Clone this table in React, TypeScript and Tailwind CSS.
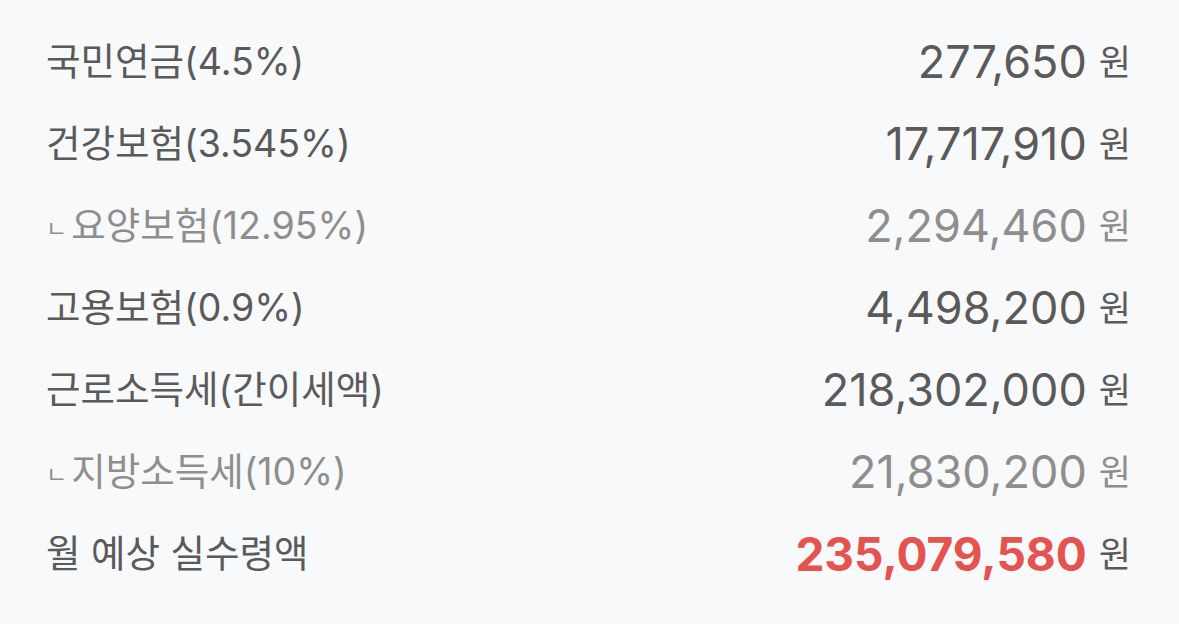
const rows = [
  { label: '국민연금(4.5%)', value: '277,650', sub: false },
  { label: '건강보험(3.545%)', value: '17,717,910', sub: false },
  { label: '요양보험(12.95%)', value: '2,294,460', sub: true },
  { label: '고용보험(0.9%)', value: '4,498,200', sub: false },
  { label: '근로소득세(간이세액)', value: '218,302,000', sub: false },
  { label: '지방소득세(10%)', value: '21,830,200', sub: true },
];

const font = { fontFamily: "Inter, 'Noto Sans CJK KR', sans-serif" };

export default function App() {
  return (
    <div className="w-full min-h-screen bg-[#f8f9fb] px-[46px] pt-[21px]" style={font}>
      {rows.map((r) => (
        <div key={r.label} className="h-[82px] flex items-center justify-between">
          <div className={`flex items-center text-[37.5px] ${r.sub ? 'text-[#8e8e8e]' : 'text-[#5a5a5a]'}`}>
            {r.sub && <span className="text-[23px] mr-[4px] mt-[6px]">ㄴ</span>}
            {r.label}
          </div>
          <div className={`flex items-center gap-[12px] mr-[2px] ${r.sub ? 'text-[#8e8e8e]' : 'text-[#5a5a5a]'}`}>
            <span className="text-[45px]">{r.value}</span>
            <span className="text-[35px]">원</span>
          </div>
        </div>
      ))}
      <div className="h-[82px] flex items-center justify-between">
        <div className="text-[37.5px] text-[#5a5a5a]">월 예상 실수령액</div>
        <div className="flex items-center gap-[12px] mr-[2px]">
          <span className="text-[46px] font-bold text-[#e5534f]">235,079,580</span>
          <span className="text-[35px] text-[#5a5a5a]">원</span>
        </div>
      </div>
    </div>
  );
}
